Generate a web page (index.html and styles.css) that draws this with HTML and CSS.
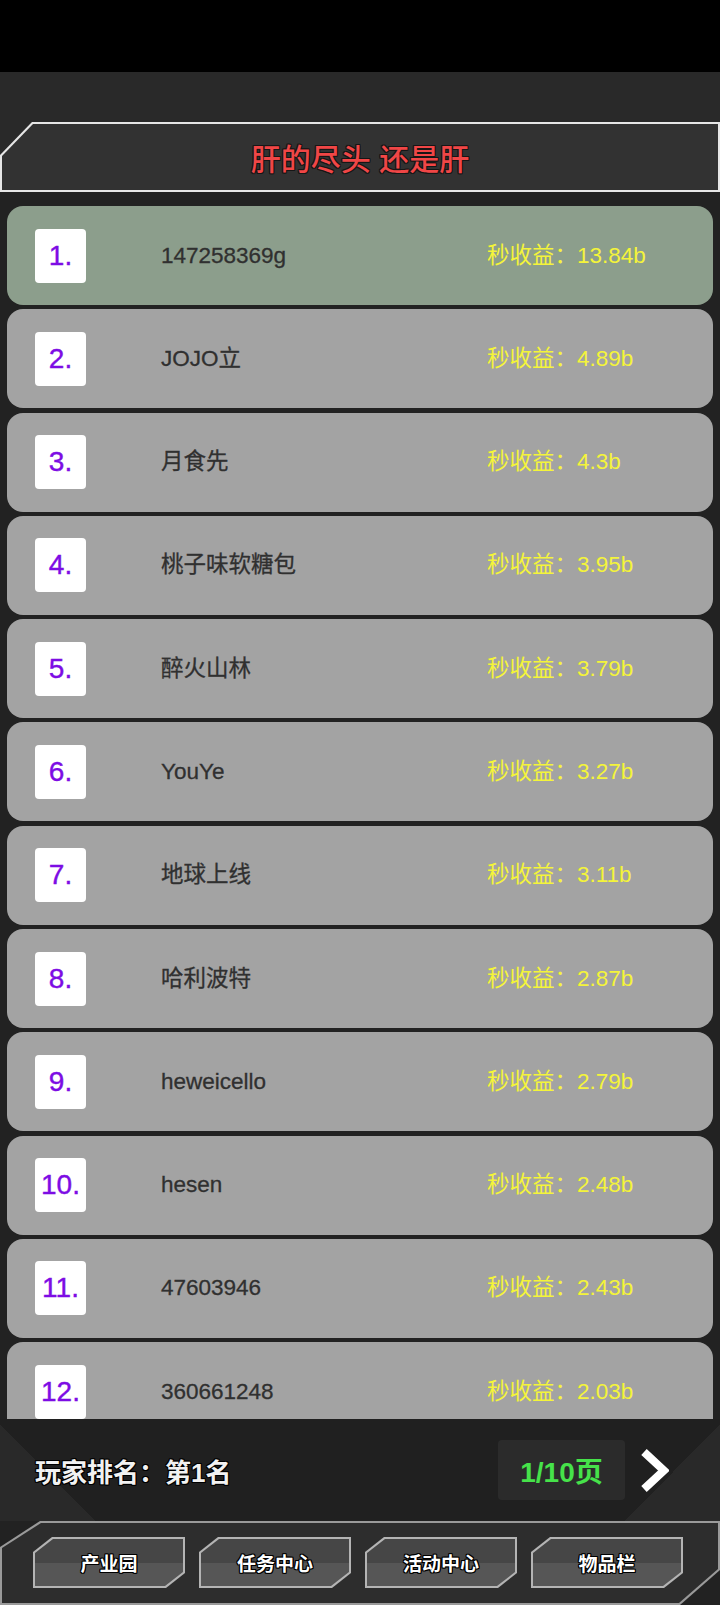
FILE: index.html
```html
<!DOCTYPE html>
<html>
<head>
	<meta charset="utf-8">
	<meta name="viewport" content="width=device-width,initial-scale=1.0">
	<title>排行榜</title>
	<link rel="stylesheet" href="styles.css">
</head>
<body>
	<div class="status"></div>
	<div class="top">
		<div class="head">
			<div class="head-in">肝的尽头 还是肝</div>
		</div>
	</div>

	<div class="board">
		<div class="row first"><span class="num">1.</span><span class="name">147258369g</span><span class="gain">秒收益：13.84b</span></div>
		<div class="row"><span class="num">2.</span><span class="name">JOJO立</span><span class="gain">秒收益：4.89b</span></div>
		<div class="row"><span class="num">3.</span><span class="name">月食先</span><span class="gain">秒收益：4.3b</span></div>
		<div class="row"><span class="num">4.</span><span class="name">桃子味软糖包</span><span class="gain">秒收益：3.95b</span></div>
		<div class="row"><span class="num">5.</span><span class="name">醉火山林</span><span class="gain">秒收益：3.79b</span></div>
		<div class="row"><span class="num">6.</span><span class="name">YouYe</span><span class="gain">秒收益：3.27b</span></div>
		<div class="row"><span class="num">7.</span><span class="name">地球上线</span><span class="gain">秒收益：3.11b</span></div>
		<div class="row"><span class="num">8.</span><span class="name">哈利波特</span><span class="gain">秒收益：2.87b</span></div>
		<div class="row"><span class="num">9.</span><span class="name">heweicello</span><span class="gain">秒收益：2.79b</span></div>
		<div class="row"><span class="num">10.</span><span class="name">hesen</span><span class="gain">秒收益：2.48b</span></div>
		<div class="row"><span class="num">11.</span><span class="name">47603946</span><span class="gain">秒收益：2.43b</span></div>
		<div class="row"><span class="num">12.</span><span class="name">360661248</span><span class="gain">秒收益：2.03b</span></div>
	</div>

	<div class="rankbar">
		<div class="myrank">玩家排名：第1名</div>
		<div class="page">1/10页</div>
		<svg class="next" width="30" height="45" viewBox="0 0 30 45">
			<polyline points="5,4 25,22.5 5,41" fill="none" stroke="#fff" stroke-width="8"/>
		</svg>
	</div>

	<div class="nav">
		<div class="nav-in">
			<div class="btn"><div class="btn-in">产业园</div></div>
			<div class="btn"><div class="btn-in">任务中心</div></div>
			<div class="btn"><div class="btn-in">活动中心</div></div>
			<div class="btn"><div class="btn-in">物品栏</div></div>
		</div>
	</div>
</body>
</html>
```

FILE: styles.css
```css
*{margin:0;padding:0;box-sizing:border-box;}
body{
	width:720px;
	height:1605px;
	overflow:hidden;
	background:#222;
	font-family:"Liberation Sans","Noto Sans CJK SC",sans-serif;
}
.status{height:72px;background:#000;}

.top{
	background:#292929;
	padding-top:50px;
}
.head{
	height:70px;
	padding:2px;
	background:#e6e6e6;
	clip-path:polygon(32px 0,100% 0,100% 100%,0 100%,0 33px);
}
.head-in{
	height:100%;
	background:#323232;
	clip-path:polygon(31px 0,100% 0,100% 100%,0 100%,0 32px);
	display:flex;
	align-items:center;
	justify-content:center;
	font-size:30px;
	font-weight:500;
	color:#f04646;
	text-shadow:-1px -1px 0 #161616,1px -1px 0 #161616,-1px 1px 0 #161616,1px 1px 0 #161616,0 1px 0 #161616,0 -1px 0 #161616,1px 0 0 #161616,-1px 0 0 #161616;
}

.board{
	height:1227px;
	overflow:hidden;
	padding:14px 7px 0;
}
.row{
	height:99px;
	margin-bottom:4.3px;
	border-radius:16px;
	background:#a3a3a3;
	display:flex;
	align-items:center;
	padding-left:28px;
}
.row.first{background:#8c9e8c;}
.num{
	width:51px;
	height:54px;
	background:#fff;
	border-radius:4px;
	display:flex;
	align-items:center;
	justify-content:center;
	font-size:28px;
	color:#7d0ce4;
	-webkit-text-stroke:0.4px #7d0ce4;
}
.name{
	margin-left:75px;
	width:326px;
	font-size:22.5px;
	line-height:30px;
	color:#303030;
	-webkit-text-stroke:0.3px #303030;
}
.gain{
	font-size:22.5px;
	line-height:30px;
	color:#f4f43a;
}

.rankbar{
	height:102px;
	display:flex;
	align-items:center;
	padding:0 51px 0 35px;
	background:
		linear-gradient(to top right,#292929 50%,transparent 50%) no-repeat left bottom/95px 97px,
		linear-gradient(to top left,#292929 50%,transparent 50%) no-repeat right bottom/95px 97px,
		#202020;
}
.myrank{
	flex:1;
	font-size:26px;
	font-weight:bold;
	color:#f2f2f2;
	text-shadow:-1px -1px 0 #000,1px -1px 0 #000,-1px 1px 0 #000,1px 1px 0 #000,0 1px 0 #000,0 -1px 0 #000,1px 0 0 #000,-1px 0 0 #000;
}
.page{
	width:127px;
	height:60px;
	background:#2b2b2b;
	border-radius:4px;
	display:flex;
	align-items:center;
	justify-content:center;
	font-size:28px;
	font-weight:bold;
	color:#46e24a;
	margin-right:14px;
}

.nav{
	height:84px;
	padding:2px;
	background:#9a9a9a;
	clip-path:polygon(40px 0,100% 0,100% calc(100% - 35px),calc(100% - 40px) 100%,0 100%,0 26px);
}
.nav-in{
	height:100%;
	background:#2d2d2d;
	clip-path:polygon(39px 0,100% 0,100% calc(100% - 34px),calc(100% - 39px) 100%,0 100%,0 25px);
	display:flex;
	gap:14px;
	padding:14px 0 0 31px;
}
.btn{
	width:152px;
	height:51px;
	padding:2px;
	background:#b4b4b4;
	clip-path:polygon(19px 0,100% 0,100% calc(100% - 15px),calc(100% - 19px) 100%,0 100%,0 15px);
}
.btn-in{
	height:100%;
	background:linear-gradient(#464646 50%,#565656 50%);
	clip-path:polygon(18px 0,100% 0,100% calc(100% - 14px),calc(100% - 18px) 100%,0 100%,0 14px);
	display:flex;
	align-items:center;
	justify-content:center;
	font-size:19px;
	font-weight:bold;
	color:#fff;
	text-shadow:-1px -1px 0 #000,1px -1px 0 #000,-1px 1px 0 #000,1px 1px 0 #000,0 1px 0 #000,0 -1px 0 #000,1px 0 0 #000,-1px 0 0 #000;
}
```
